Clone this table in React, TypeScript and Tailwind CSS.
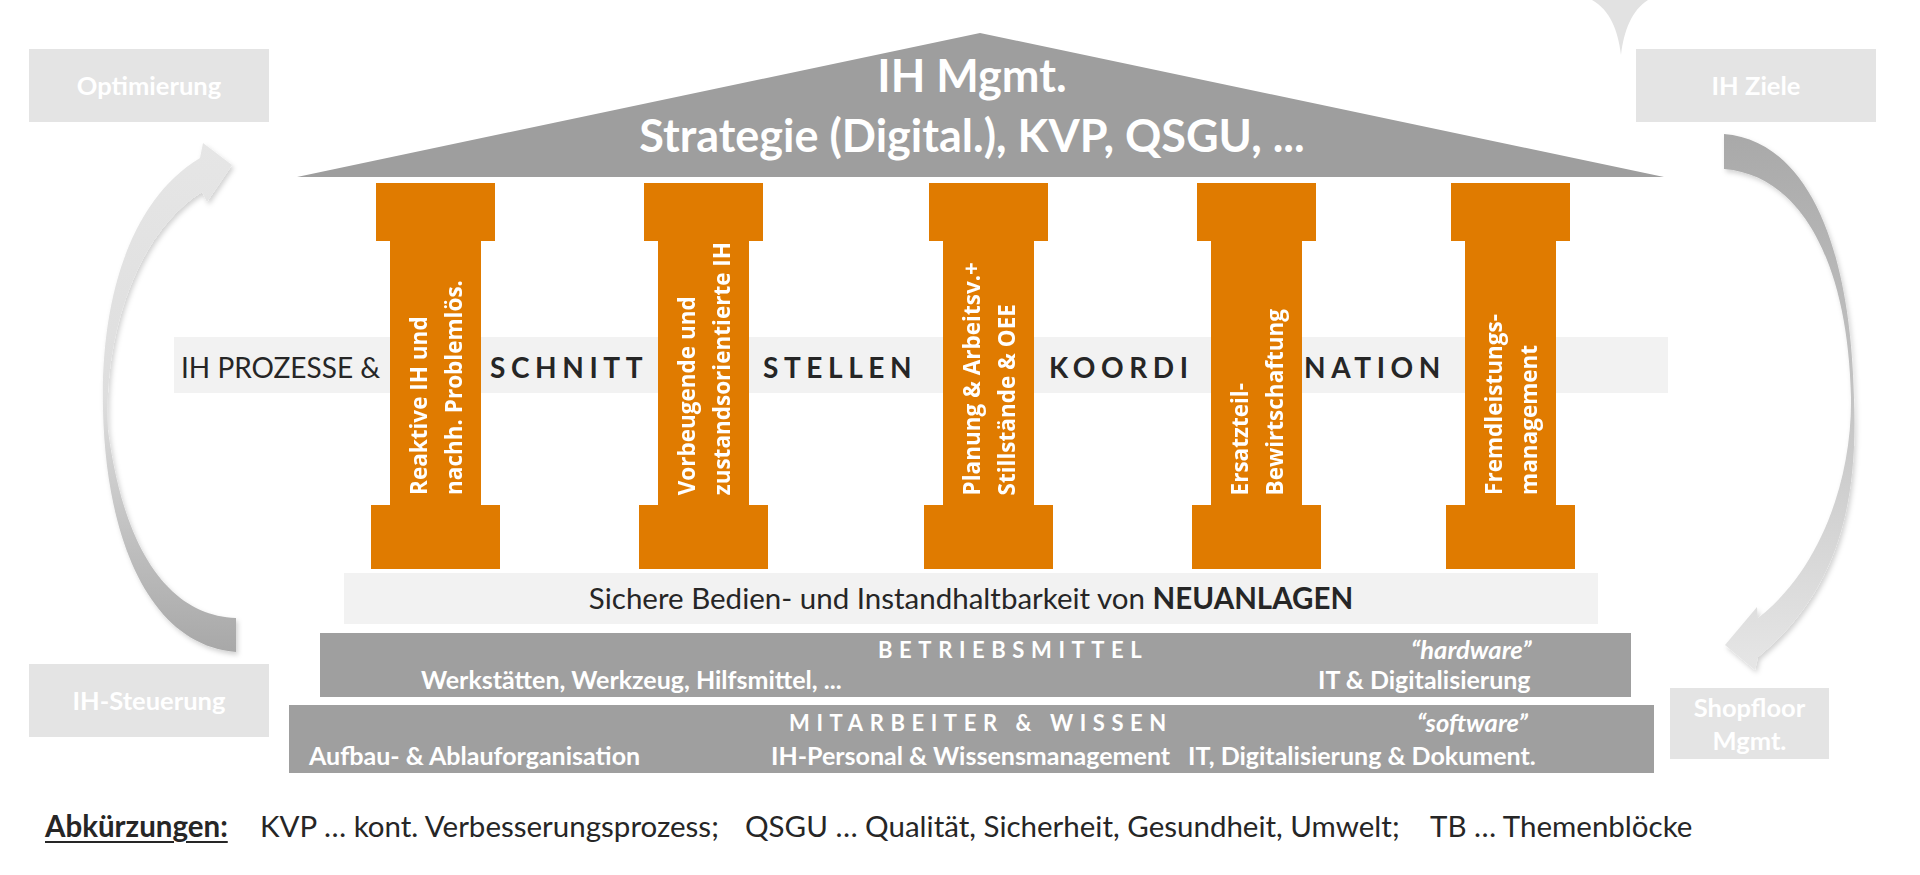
import React from "react";

interface Pillar {
  gap: string;
  lines: [string, string];
}

const pillars: Pillar[] = [
  { gap: "ml-0", lines: ["Reaktive IH und", "nachh. Problemlös."] },
  { gap: "ml-[139px]", lines: ["Vorbeugende und", "zustandsorientierte IH"] },
  { gap: "ml-[156px]", lines: ["Planung & Arbeitsv.+", "Stillstände & OEE"] },
  { gap: "ml-[139px]", lines: ["Ersatzteil-", "Bewirtschaftung"] },
  { gap: "ml-[125px]", lines: ["Fremdleistungs-", "management"] },
];

function Column({ pillar }: { pillar: Pillar }) {
  return (
    <div className={`relative z-10 flex w-[129px] flex-col items-center ${pillar.gap}`}>
      <div className="h-[58px] w-[119px] bg-[#e07b00]" />
      <div className="flex h-[264px] w-[91px] items-end justify-center bg-[#e07b00] pb-[10px]">
        <div className="rotate-180 whitespace-nowrap font-['Open_Sans',sans-serif] text-[22.5px] font-bold leading-[35px] text-white [writing-mode:vertical-rl]">
          {pillar.lines[0]}
          <br />
          {pillar.lines[1]}
        </div>
      </div>
      <div className="h-[64px] w-[129px] bg-[#e07b00]" />
    </div>
  );
}

function Arrows() {
  return (
    <svg className="pointer-events-none absolute left-0 top-0" width="1920" height="875" viewBox="0 0 1920 875">
      <defs>
        <linearGradient id="lg" gradientUnits="userSpaceOnUse" x1="0" y1="140" x2="0" y2="652">
          <stop offset="0" stopColor="#e6e6e6" />
          <stop offset="0.5" stopColor="#dedede" />
          <stop offset="1" stopColor="#a8a8a8" />
        </linearGradient>
        <linearGradient id="rg" gradientUnits="userSpaceOnUse" x1="0" y1="134" x2="0" y2="670">
          <stop offset="0" stopColor="#a9a9a9" />
          <stop offset="0.5" stopColor="#c4c4c4" />
          <stop offset="1" stopColor="#e6e6e6" />
        </linearGradient>
        <filter id="sh" x="-20%" y="-20%" width="140%" height="140%">
          <feDropShadow dx="2" dy="3" stdDeviation="2.5" floodColor="#000" floodOpacity="0.18" />
        </filter>
      </defs>
      {/* left loop: IH-Steuerung -> Optimierung */}
      <path
        filter="url(#sh)"
        fill="url(#lg)"
        d="M236 618 C175 616 125 560 108 430 C103 330 140 230 202 192 L207 202 L232 165 L203 143 L200 158 C130 200 100 300 103 410 C106 540 150 645 236 652 Z"
      />
      {/* right loop: IH Ziele -> Shopfloor */}
      <path
        filter="url(#sh)"
        fill="url(#rg)"
        d="M1724 134 C1800 140 1850 230 1854 398 C1858 500 1840 590 1758 657 L1755 670 L1725 645 L1757 607 L1758 618 C1820 570 1852 480 1851 398 C1848 260 1800 175 1724 169 Z"
      />
      {/* tip coming in from above */}
      <path fill="#e2e2e2" d="M1592 0 C1610 10 1618 30 1621 55 C1624 30 1632 10 1648 0 Z" />
    </svg>
  );
}

function SideBox({ pos, children }: { pos: string; children: React.ReactNode }) {
  return (
    <div
      className={`absolute flex flex-col items-center justify-center bg-[#e4e4e4] text-center text-[25.5px] font-bold leading-[33px] text-white ${pos}`}
    >
      {children}
    </div>
  );
}

export default function App() {
  return (
    <div className="relative h-[875px] w-[1920px] overflow-hidden bg-white font-['Lato',sans-serif] text-[#262626]">
      <Arrows />

      <SideBox pos="left-[29px] top-[49px] h-[73px] w-[240px]">Optimierung</SideBox>
      <SideBox pos="left-[29px] top-[664px] h-[73px] w-[240px]">IH-Steuerung</SideBox>
      <SideBox pos="left-[1636px] top-[49px] h-[73px] w-[240px]">IH Ziele</SideBox>
      <SideBox pos="left-[1670px] top-[688px] h-[71px] w-[159px]">
        <span>Shopfloor</span>
        <span>Mgmt.</span>
      </SideBox>

      <div className="relative flex flex-col pt-[33px]">
        {/* Roof */}
        <div className="relative ml-[297px] h-[144px] w-[1367px]">
          <svg className="absolute inset-0" width="1367" height="144" viewBox="0 0 1367 144">
            <polygon points="0,144 683,0 1367,144" fill="#9e9e9e" />
          </svg>
          <div className="relative flex flex-col items-center pr-[17px] pt-[12px] text-[45px] font-bold leading-[60px] text-white">
            <span>IH Mgmt.</span>
            <span>Strategie (Digital.), KVP, QSGU, ...</span>
          </div>
        </div>

        {/* Pillars + process band */}
        <div className="relative mt-[6px] h-[386px]">
          <div className="absolute left-[174px] top-[154px] h-[56px] w-[1494px] bg-[#f2f2f2] text-[28px]">
            <span className="absolute left-[7px] top-[9px]">IH PROZESSE &amp;</span>
            <span className="absolute left-[316px] top-[9px] font-bold tracking-[0.2em]">SCHNITT</span>
            <span className="absolute left-[589px] top-[9px] font-bold tracking-[0.2em]">STELLEN</span>
            <span className="absolute left-[875px] top-[9px] font-bold tracking-[0.2em]">KOORDI</span>
            <span className="absolute left-[1130px] top-[9px] font-bold tracking-[0.2em]">NATION</span>
          </div>
          <div className="relative flex pl-[371px]">
            {pillars.map((p) => (
              <Column key={p.lines[0]} pillar={p} />
            ))}
          </div>
        </div>

        {/* Neuanlagen */}
        <div className="ml-[344px] mt-[4px] flex h-[51px] w-[1254px] items-center justify-center bg-[#f2f2f2] text-[29.5px]">
          <span>
            Sichere Bedien- und Instandhaltbarkeit von <b>NEUANLAGEN</b>
          </span>
        </div>

        {/* Betriebsmittel */}
        <div className="ml-[320px] mt-[9px] flex h-[64px] w-[1311px] flex-col bg-[#9f9f9f] font-bold text-white">
          <div className="flex h-[30px] items-center pl-[558px] pt-[3px]">
            <span className="w-[533px] text-[22px] tracking-[0.3em]">BETRIEBSMITTEL</span>
            <span className="text-[25.5px] italic">“hardware”</span>
          </div>
          <div className="flex h-[34px] items-center pl-[101px] text-[25px]">
            <span className="w-[897px]">Werkstätten, Werkzeug, Hilfsmittel, ...</span>
            <span>IT &amp; Digitalisierung</span>
          </div>
        </div>

        {/* Mitarbeiter */}
        <div className="ml-[289px] mt-[8px] flex h-[68px] w-[1365px] flex-col bg-[#9f9f9f] font-bold text-white">
          <div className="flex h-[33px] items-center pl-[500px] pt-[2px]">
            <span className="w-[628px] text-[22px] tracking-[0.3em]">MITARBEITER &amp; WISSEN</span>
            <span className="text-[25.5px] italic">“software”</span>
          </div>
          <div className="flex h-[35px] items-center pl-[20px] text-[25px]">
            <span className="w-[462px]">Aufbau- &amp; Ablauforganisation</span>
            <span className="w-[417px]">IH-Personal &amp; Wissensmanagement</span>
            <span>IT, Digitalisierung &amp; Dokument.</span>
          </div>
        </div>

        {/* Legend */}
        <div className="ml-[45px] mt-[36px] flex text-[29.5px] leading-[34px]">
          <span className="w-[215px] font-bold underline decoration-2 underline-offset-4">Abkürzungen:</span>
          <span className="w-[485px]">KVP … kont. Verbesserungsprozess;</span>
          <span className="w-[685px]">QSGU … Qualität, Sicherheit, Gesundheit, Umwelt;</span>
          <span>TB … Themenblöcke</span>
        </div>
      </div>
    </div>
  );
}
